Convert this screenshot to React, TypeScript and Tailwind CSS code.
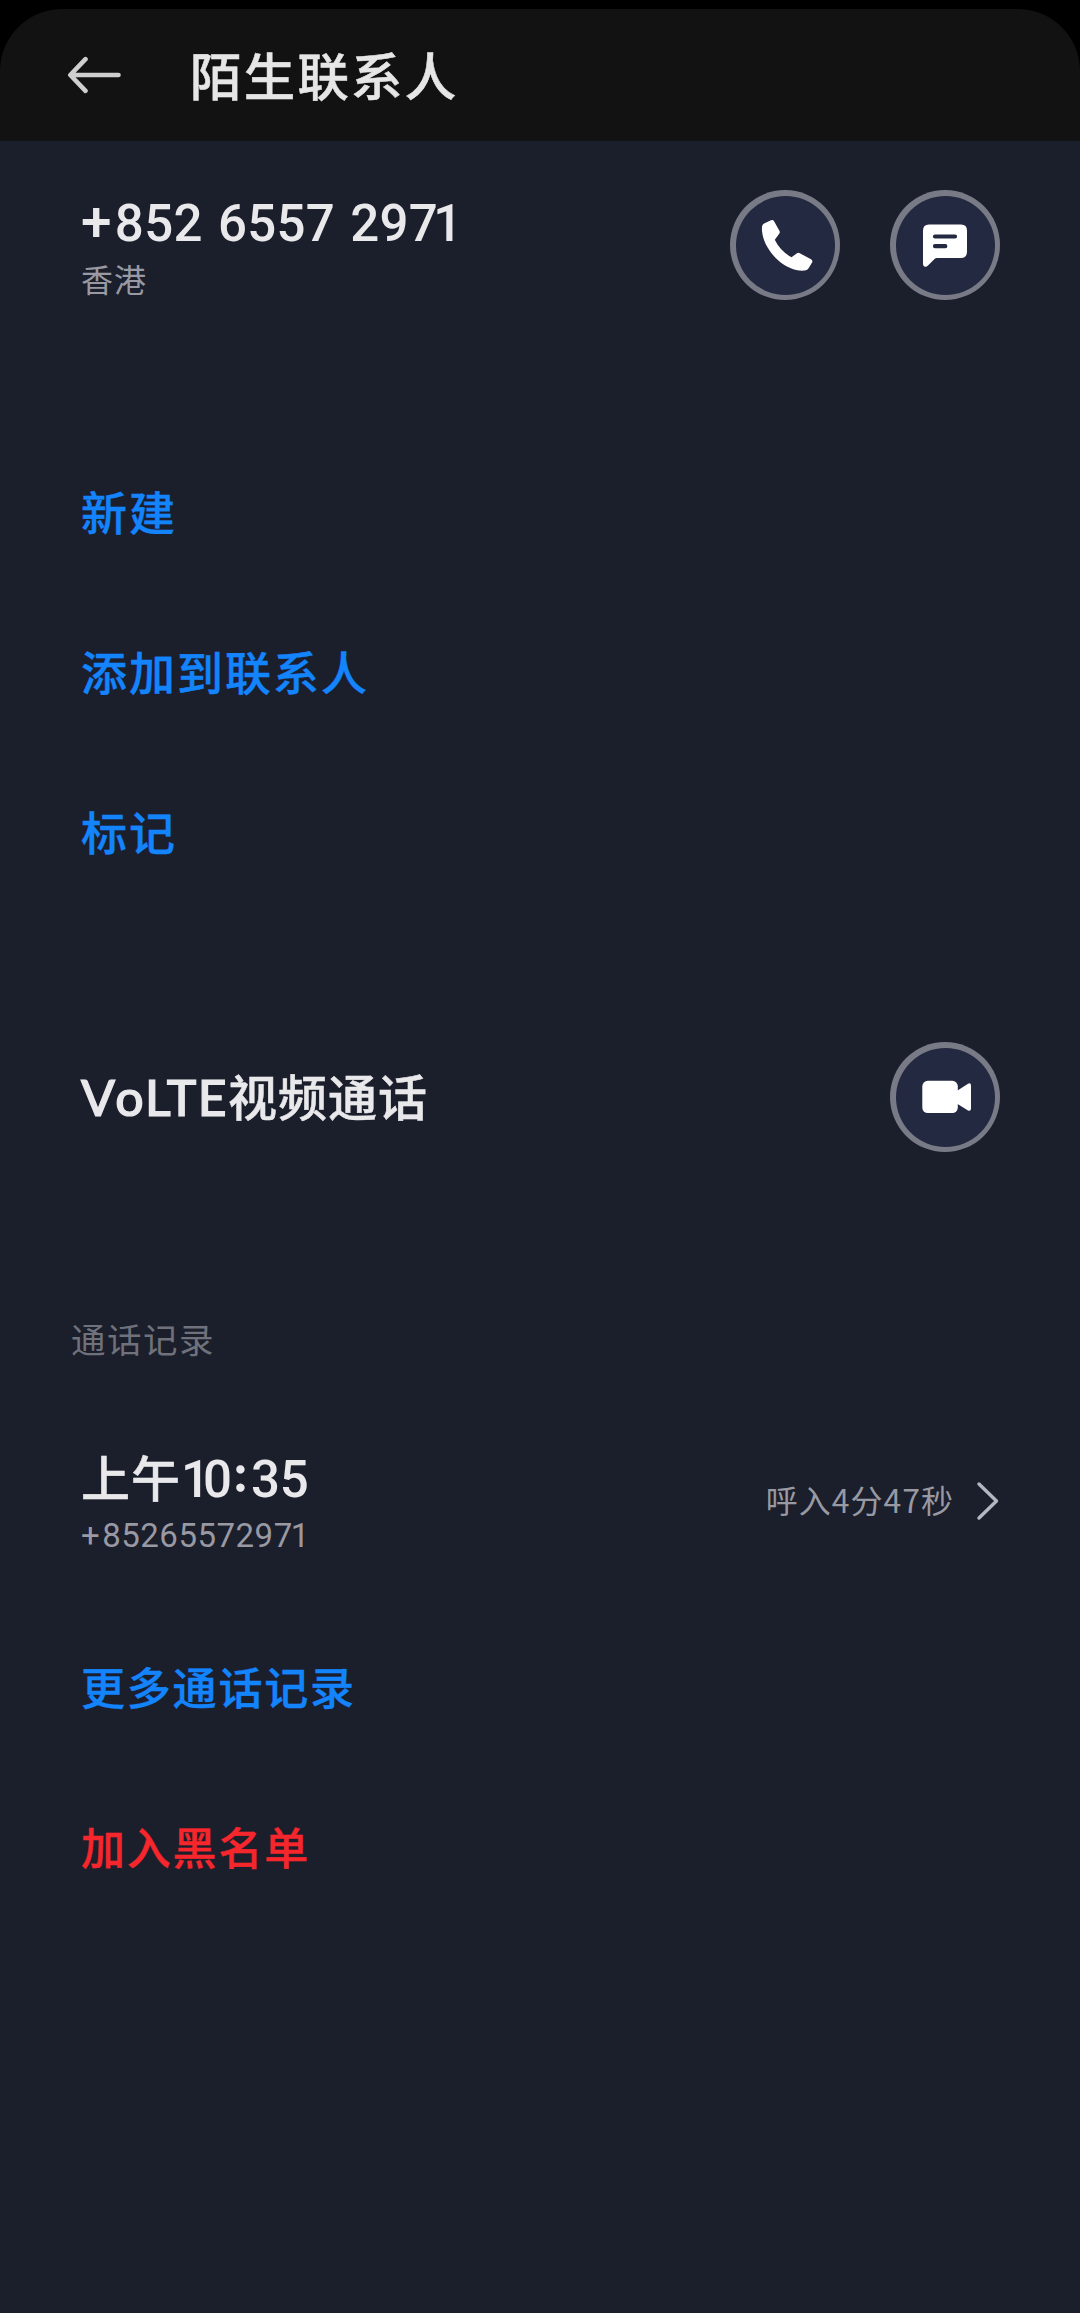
import type { ReactNode } from "react";

const CJK = "font-['Noto_Sans_CJK_SC',sans-serif]";

function BackArrow() {
  return (
    <svg width="56" height="38" viewBox="0 0 56 38" fill="none" stroke="#cfcfcf" strokeWidth="4.6" strokeLinecap="round" strokeLinejoin="round">
      <path d="M18.5 3.2 3.3 19 18.5 34.8M4 19H51.5" />
    </svg>
  );
}

function PhoneIcon() {
  return (
    <svg width="110" height="110" viewBox="0 0 110 110" fill="#fff">
      <path d="M34 33.5 41 30.3Q43 29.6 44.2 31.4L49.4 40.8Q50.3 42.5 49.2 43.8L44.8 49.8C48.5 57.5 54.5 63.5 61.5 67.3L67 63.2Q68.2 62.3 69.8 63.2L81 69.3Q82.9 70.5 82.2 72.2L78.8 78Q77.5 80.2 75 80.5C66 81.5 57 77.5 49.5 71.5C40.5 64 33 52.5 32 41C31.8 37.5 31.8 34.8 34 33.5Z" />
    </svg>
  );
}

function MessageIcon() {
  return (
    <svg width="110" height="110" viewBox="0 0 110 110" fill="none">
      <path d="M39 34.5H71Q77 34.5 77 40.5V61.5Q77 68 71 68H47Q45.5 68 44.5 69L38 75.5Q36.5 77 34.8 76.7Q33 76.3 33 74V40.5Q33 34.5 39 34.5Z" fill="#fff" />
      <path d="M45 46.5H65M45 56.2H55.3" stroke="#242942" strokeWidth="4.2" strokeLinecap="round" />
    </svg>
  );
}

function VideoIcon() {
  return (
    <svg width="110" height="110" viewBox="0 0 110 110" fill="#fff">
      <rect x="32.3" y="38.8" width="35.5" height="32.2" rx="5.5" />
      <path d="M66 49.5 78 41.7Q81 40.5 81 43.5V66.5Q81 69.5 78 68.5L66 61Z" />
    </svg>
  );
}

function CircleButton({ label, children }: { label: string; children: ReactNode }) {
  return (
    <button aria-label={label} className="grid size-[110px] place-items-center rounded-full bg-[#787a86]">
      <span className="grid size-[99px] place-items-center rounded-full bg-[#242942]">
        <span className="-m-2 block size-[110px]">{children}</span>
      </span>
    </button>
  );
}

function ActionRow({ className, children }: { className: string; children: ReactNode }) {
  return (
    <button className={`flex h-[160px] w-full items-center pb-[4px] pl-[81px] text-left font-medium whitespace-nowrap [-webkit-text-stroke:0.4px_currentColor] ${className}`}>
      {children}
    </button>
  );
}

export default function App() {
  return (
    <div className={`flex h-[2313px] w-[1080px] flex-col overflow-hidden bg-[#1b1e2b] text-[#e9e9ec] ${CJK}`}>
      <div className="bg-black pt-[9px]">
        <header className="flex h-[132px] items-center rounded-t-[62px] bg-[#121212] pl-[67px]">
          <BackArrow />
          <h1 className="ml-[67px] pb-[3px] text-[51.5px] leading-[60px] font-medium tracking-[2.2px] whitespace-nowrap text-[#e6e6e6] [-webkit-text-stroke:0.5px_currentColor]">陌生联系人</h1>
        </header>
      </div>

      <section className="mt-[24px] flex h-[160px] items-center justify-between pr-[80px] pl-[81px]">
        <div className="flex flex-col pt-[5px]">
          <span className="font-[Roboto,sans-serif] text-[51px] leading-[60px] font-medium tracking-[0.3px] [word-spacing:2.2px] whitespace-nowrap">
            <span className="mr-[3px] text-[55px] leading-[50px]">+</span>852 6557 29<span className="tracking-[-4.5px]">7</span>1
          </span>
          <span className="text-[32px] leading-[48px] tracking-[1px] text-[#9899a2]">香港</span>
        </div>
        <div className="flex gap-[50px]">
          <CircleButton label="拨打电话"><PhoneIcon /></CircleButton>
          <CircleButton label="发送短信"><MessageIcon /></CircleButton>
        </div>
      </section>

      <nav className="mt-[107px] flex flex-col text-[46px] tracking-[2px] text-[#1384fc]">
        <ActionRow className="">新建</ActionRow>
        <ActionRow className="">添加到联系人</ActionRow>
        <ActionRow className="">标记</ActionRow>
      </nav>

      <section className="mt-[105px] flex h-[160px] items-center justify-between pr-[80px] pl-[81px]">
        <span className="flex items-baseline pb-[2px] text-[49px] leading-[60px] font-medium whitespace-nowrap [-webkit-text-stroke:0.5px_currentColor]">
          <span className="font-[Lato,sans-serif] text-[50px] tracking-[1.3px] [-webkit-text-stroke:1.2px_currentColor]">
            <span className="tracking-[0.2px]">V</span>o<span className="tracking-[-4px]">L</span>TE
          </span>
          <span className="tracking-[1px]">视频通话</span>
        </span>
        <CircleButton label="视频通话"><VideoIcon /></CircleButton>
      </section>

      <h2 className="mt-[136px] pl-[71px] text-[34.5px] leading-[50px] tracking-[1.5px] text-[#6f717b]">通话记录</h2>

      <section className="mt-[58px] flex h-[160px] items-center justify-between pr-[80px] pl-[81px]">
        <div className="flex flex-col pt-[5px]">
          <span className="flex h-[65px] items-baseline text-[49px] leading-[58px] font-medium whitespace-nowrap">
            <span className="tracking-[1px] [-webkit-text-stroke:0.5px_currentColor]">上午</span>
            <span className="font-[Roboto,sans-serif] text-[51px]">
              <span className="tracking-[-7px]">1</span>0<span className="mr-[4px] ml-[2px] align-[6.5px] font-[Lato,sans-serif] leading-[30px] [-webkit-text-stroke:1.6px_currentColor]">:</span>35
            </span>
          </span>
          <span className="font-[Roboto,sans-serif] text-[33px] leading-[48px] tracking-[0.5px] text-[#9899a2]">
            <span className="mr-[2px]">+</span>852655729<span className="tracking-[-1.5px]">7</span>1
          </span>
        </div>
        <div className="flex items-center">
          <span className="pb-[5px] text-[32px] leading-[48px] tracking-[1px] whitespace-nowrap text-[#9899a2]">呼入4分47秒</span>
          <svg className="ml-[22px]" width="24" height="40" viewBox="0 0 24 40" fill="none" stroke="#b5b7c0" strokeWidth="3.4" strokeLinecap="round" strokeLinejoin="round">
            <path d="M3 3 20.5 20 3 37" />
          </svg>
        </div>
      </section>

      <nav className="mt-[27px] flex flex-col text-[44px] tracking-[1.8px]">
        <ActionRow className="text-[#1384fc]">更多通话记录</ActionRow>
        <ActionRow className="text-[#f5262c]">加入黑名单</ActionRow>
      </nav>
    </div>
  );
}
